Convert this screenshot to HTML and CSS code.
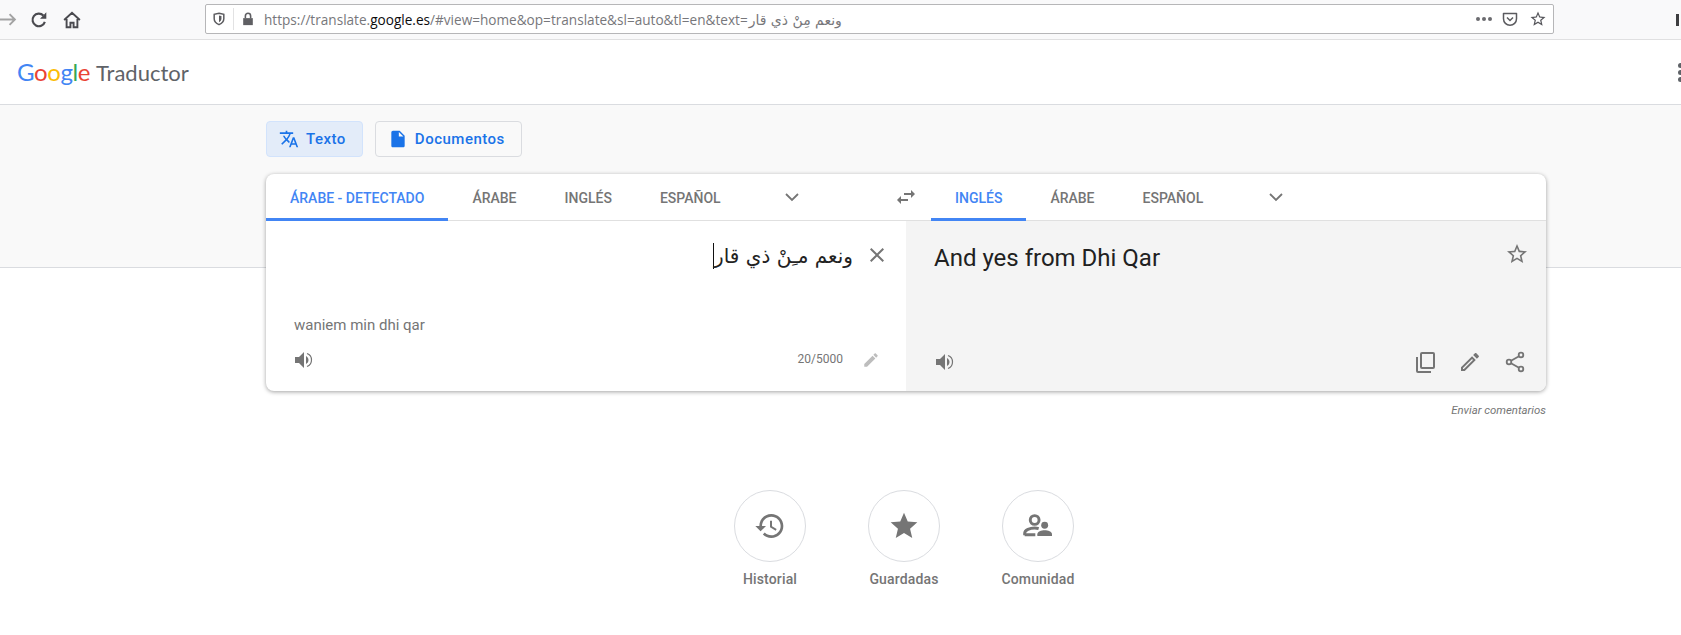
FILE: index.html
```html
<!DOCTYPE html>
<html lang="es">
<head>
  <meta charset="utf-8">
  <title>Google Traductor</title>
  <link rel="stylesheet" href="styles.css">
</head>
<body>

<div class="toolbar">
  <svg class="tb-back" viewBox="0 0 16 16"><path d="M-3 8h17M9 3l5 5-5 5" fill="none" stroke="#a3a3a3" stroke-width="1.8"/></svg>
  <svg class="tb-reload" viewBox="0 0 16 16"><path d="M13.2 9.6A5.6 5.6 0 1 1 11.9 4" fill="none" stroke="#4a4a4f" stroke-width="1.9"/><path d="M14.5 1.2v5.6H8.9z" fill="#4a4a4f"/></svg>
  <svg class="tb-home" viewBox="0 0 16 16"><path d="M1 8l7-6.5L15 8M3.2 7v7.5h3.4v-4h2.8v4h3.4V7" fill="none" stroke="#4a4a4f" stroke-width="1.7"/></svg>
  <div class="urlbar">
    <svg class="ub-shield" viewBox="0 0 16 16"><path d="M8 1.5l5.5 1.2v5c0 3-2.3 5.4-5.5 6.8-3.2-1.4-5.5-3.8-5.5-6.8v-5z" fill="none" stroke="#5b5b5f" stroke-width="1.7"/><path d="M8 4l2.8.7v3c0 1.700-1.200 3-2.800 3.900z" fill="#5b5b5f"/></svg>
    <span class="ub-sep"></span>
    <svg class="ub-lock" viewBox="0 0 16 16"><path d="M2.500 7h11v8h-11z" fill="#5f5f63"/><path d="M5 7V4.500a3 3 0 0 1 6 0V7" fill="none" stroke="#5f5f63" stroke-width="1.800"/></svg>
    <div class="ub-url">https://translate.<b>google.es</b>/#view=home&amp;op=translate&amp;sl=auto&amp;tl=en&amp;text=<bdi lang="ar">ونعم مِنْ ذي قار</bdi></div>
    <span class="ub-dots"><i></i><i></i><i></i></span>
    <svg class="ub-pocket" viewBox="0 0 16 16"><path d="M1.500 2.500h13v5.300a6.500 6.500 0 0 1-13 0z" fill="none" stroke="#5b5b5f" stroke-width="1.500" stroke-linejoin="round"/><path d="M5 6.500l3 3 3-3" fill="none" stroke="#5b5b5f" stroke-width="1.500"/></svg>
    <svg class="ub-star" viewBox="0 0 24 24"><path fill="#55555a" d="M22 9.240l-7.190-.62L12 2 9.190 8.630 2 9.240l5.460 4.730L5.820 21 12 17.270 18.180 21l-1.630-7.030L22 9.240zM12 15.400l-3.760 2.270 1-4.280-3.320-2.880 4.380-.38L12 6.100l1.710 4.040 4.380.38-3.320 2.880 1 4.280L12 15.400z"/></svg>
  </div>
  <span class="tb-edge"></span>
</div>

<header class="appbar">
  <div class="logo">
    <span class="logo-google"><i class="c-blue">G</i><i class="c-red">o</i><i class="c-yellow">o</i><i class="c-blue">g</i><i class="c-green">l</i><i class="c-red">e</i></span>
    <span class="logo-name">Traductor</span>
  </div>
  <span class="appbar-dots"><i></i><i></i><i></i></span>
</header>

<main class="main">
  <div class="modes">
    <button class="mode mode-on">
      <svg viewBox="0 0 24 24"><path d="M12.870 15.070l-2.540-2.510.03-.03c1.740-1.940 2.980-4.170 3.710-6.530H17V4h-7V2H8v2H1v1.990h11.170C11.500 7.920 10.440 9.750 9 11.350 8.070 10.320 7.300 9.190 6.690 8h-2c.73 1.630 1.730 3.170 2.980 4.560l-5.090 5.020L4 19l5-5 3.110 3.110.76-2.040zM18.500 10h-2L12 22h2l1.120-3h4.750L21 22h2l-4.500-12zm-2.620 7l1.620-4.330L19.120 17h-3.240z"/></svg>
      Texto
    </button>
    <button class="mode">
      <svg viewBox="0 0 24 24"><path d="M14 2H6c-1.100 0-2 .9-2 2v16c0 1.100.9 2 2 2h12c1.100 0 2-.9 2-2V8l-6-6zm-1 7V3.500L18.500 9H13z"/></svg>
      Documentos
    </button>
  </div>

  <section class="card">
    <div class="tabbar">
      <div class="tabs tabs-src">
        <span class="tab tab-on">ÁRABE - DETECTADO</span>
        <span class="tab">ÁRABE</span>
        <span class="tab">INGLÉS</span>
        <span class="tab">ESPAÑOL</span>
        <svg class="chev" viewBox="0 0 24 24"><path d="M6 9l6 6 6-6" fill="none" stroke="#757575" stroke-width="1.800"/></svg>
      </div>
      <svg class="swap" viewBox="0 0 24 24"><path d="M6.990 11L3 15l3.990 4v-3H14v-2H6.990v-3zM21 9l-3.990-4v3H10v2h7.010v3L21 9z"/></svg>
      <div class="tabs tabs-dst">
        <span class="tab tab-on">INGLÉS</span>
        <span class="tab">ÁRABE</span>
        <span class="tab">ESPAÑOL</span>
        <svg class="chev" viewBox="0 0 24 24"><path d="M6 9l6 6 6-6" fill="none" stroke="#757575" stroke-width="1.800"/></svg>
      </div>
    </div>

    <div class="panes">
      <div class="pane pane-src">
        <div class="src-row">
          <div class="src-text"><span class="caret"></span><bdi lang="ar">ونعم مـِنْ ذي قار</bdi></div>
          <svg class="ico ico-close" viewBox="0 0 24 24"><path d="M19 6.410L17.590 5 12 10.590 6.410 5 5 6.410 10.590 12 5 17.590 6.410 19 12 13.410 17.590 19 19 17.590 13.410 12z"/></svg>
        </div>
        <div class="translit">waniem min dhi qar</div>
        <div class="pane-foot">
          <svg class="ico" viewBox="0 0 24 24"><path d="M3 9v6h4l5 5V4L7 9H3zm13.500 3c0-1.770-1.020-3.290-2.500-4.030v8.050c1.480-.73 2.500-2.250 2.500-4.020z"/><path d="M15 5.500c3 1 4.500 3.500 4.500 6.500s-1.500 5.500-4.500 6.500" fill="none" stroke="#757575" stroke-width="1.200"/></svg>
          <span class="count">20/5000</span>
          <svg class="ico ico-faint" viewBox="0 0 24 24"><path d="M3 17.250V21h3.750L17.810 9.940l-3.750-3.750L3 17.250zM20.710 7.040c.39-.39.39-1.020 0-1.410l-2.340-2.340c-.39-.39-1.020-.39-1.410 0l-1.830 1.830 3.750 3.750 1.830-1.830z"/></svg>
        </div>
      </div>

      <div class="pane pane-dst">
        <div class="dst-row">
          <div class="dst-text">And yes from Dhi Qar</div>
          <svg class="ico" viewBox="0 0 24 24"><path d="M22 9.240l-7.190-.62L12 2 9.190 8.630 2 9.240l5.460 4.730L5.820 21 12 17.270 18.180 21l-1.630-7.030L22 9.240zM12 15.400l-3.760 2.270 1-4.280-3.320-2.880 4.380-.38L12 6.100l1.710 4.040 4.380.38-3.320 2.880 1 4.280L12 15.400z"/></svg>
        </div>
        <div class="pane-foot dst-foot">
          <svg class="ico" viewBox="0 0 24 24"><path d="M3 9v6h4l5 5V4L7 9H3zm13.500 3c0-1.770-1.020-3.290-2.500-4.030v8.050c1.480-.73 2.500-2.250 2.500-4.020z"/><path d="M15 5.500c3 1 4.500 3.500 4.500 6.500s-1.500 5.500-4.500 6.500" fill="none" stroke="#757575" stroke-width="1.200"/></svg>
          <span class="dst-actions">
            <svg class="ico" viewBox="0 0 24 24"><rect x="8" y="3" width="13" height="15" rx="1" fill="none" stroke="#757575" stroke-width="2"/><path d="M4 7v14a1 1 0 0 0 1 1h13" fill="none" stroke="#757575" stroke-width="2"/></svg>
            <svg class="ico" viewBox="0 0 24 24"><path d="M14.060 9.020l.92.92L5.920 19H5v-.92l9.060-9.060M17.660 3c-.25 0-.51.100-.7.290l-1.830 1.830 3.750 3.750 1.830-1.830c.39-.39.39-1.020 0-1.410l-2.340-2.340c-.2-.2-.45-.29-.71-.29zm-3.600 3.190L3 17.250V21h3.750L17.810 9.940l-3.750-3.750z"/></svg>
            <svg class="ico" viewBox="0 0 24 24"><g fill="none" stroke="#757575" stroke-width="1.800"><circle cx="18" cy="5" r="2.300"/><circle cx="6" cy="12" r="2.300"/><circle cx="18" cy="19" r="2.300"/><path d="M8 10.800l8-4.600M8 13.200l8 4.600"/></g></svg>
          </span>
        </div>
      </div>
    </div>
  </section>

  <div class="feedback">Enviar comentarios</div>

  <div class="shortcuts">
    <div class="shortcut">
      <span class="round"><svg viewBox="0 0 24 24"><path d="M13 3c-4.970 0-9 4.030-9 9H1l3.890 3.890.07.14L9 12H6c0-3.870 3.130-7 7-7s7 3.130 7 7-3.130 7-7 7c-1.930 0-3.680-.79-4.940-2.060l-1.420 1.420C8.270 19.990 10.510 21 13 21c4.970 0 9-4.030 9-9s-4.030-9-9-9zm-1 5v5l4.280 2.540.72-1.210-3.500-2.080V8H12z"/></svg></span>
      <span class="shortcut-name">Historial</span>
    </div>
    <div class="shortcut">
      <span class="round"><svg viewBox="0 0 24 24"><path d="M12 17.270L18.180 21l-1.640-7.030L22 9.240l-7.190-.61L12 2 9.190 8.630 2 9.240l5.460 4.730L5.820 21z"/></svg></span>
      <span class="shortcut-name">Guardadas</span>
    </div>
    <div class="shortcut">
      <span class="round"><svg viewBox="0 0 24 24"><circle cx="9.500" cy="7.500" r="3.300" fill="none" stroke="#757575" stroke-width="2.200"/><path d="M2 19v-1.500c0-2.600 4-4 7.500-4 1 0 2 .1 3 .4M2 18.500h8" fill="none" stroke="#757575" stroke-width="2.200"/><circle cx="17" cy="11.500" r="2.600"/><path d="M11.500 19.500v-1.300c0-2 3-3 5.500-3s5.500 1 5.500 3v1.300z"/></svg></span>
      <span class="shortcut-name">Comunidad</span>
    </div>
  </div>
</main>

</body>
</html>
```

FILE: styles.css
```css
html, body {
  height: 100%;
  margin: 0;
}
body {
  background: #fff;
  font-family: Roboto, "Liberation Sans", sans-serif;
  color: #757575;
  overflow: hidden;
}

/* browser chrome */
.toolbar {
  display: flex;
  align-items: center;
  height: 39px;
  background: #f9f9fa;
  border-bottom: 1px solid #e0e0e1;
}
.toolbar svg {
  flex: none;
}
.tb-back {
  width: 17px;
  height: 17px;
}
.tb-reload {
  width: 18px;
  height: 18px;
  margin-left: 13px;
}
.tb-home {
  width: 18px;
  height: 18px;
  margin-left: 15px;
}
.urlbar {
  display: flex;
  align-items: center;
  width: 1349px;
  height: 30px;
  margin-left: 124px;
  margin-top: -1px;
  box-sizing: border-box;
  background: #fff;
  border: 1px solid #b6b6b8;
  border-radius: 2px;
  font-family: "Open Sans", sans-serif;
  font-size: 13.6px;
  color: #77777b;
}
.ub-shield {
  width: 14px;
  height: 14px;
  margin-left: 6px;
}
.ub-sep {
  width: 1px;
  height: 22px;
  margin-left: 7px;
  background: #e2e2e3;
}
.ub-lock {
  width: 14px;
  height: 14px;
  margin-left: 7px;
}
.ub-url {
  flex: 1;
  margin-left: 9px;
  white-space: nowrap;
}
.ub-url b {
  font-weight: 400;
  color: #0c0c0d;
}
.ub-url bdi {
  font-family: "DejaVu Sans", sans-serif;
  font-size: 14px;
  margin-left: 1px;
}
.ub-dots {
  display: flex;
  gap: 2px;
  margin-right: 10px;
}
.ub-dots i {
  width: 4px;
  height: 4px;
  border-radius: 50%;
  background: #6b6b6f;
}
.ub-pocket {
  width: 16px;
  height: 16px;
  margin-right: 11px;
}
.ub-star {
  width: 18px;
  height: 18px;
  margin-right: 6px;
}
.tb-edge {
  width: 3px;
  height: 12px;
  margin-left: 122px;
  background: #3d3d40;
}

/* app header */
.appbar {
  display: flex;
  align-items: center;
  justify-content: space-between;
  height: 64px;
  background: #fff;
  border-bottom: 1px solid #dadce0;
}
.logo {
  display: flex;
  align-items: baseline;
  gap: 6px;
  margin-left: 17px;
  margin-top: -2px;
}
.logo-google {
  font-family: Lato, sans-serif;
  font-size: 24px;
  letter-spacing: -.4px;
}
.logo-google i {
  font-style: normal;
}
.c-blue { color: #4285f4; }
.c-red { color: #ea4335; }
.c-yellow { color: #fbbc05; }
.c-green { color: #34a853; }
.logo-name {
  font-family: Lato, sans-serif;
  font-size: 22px;
  color: #5f6368;
}
.appbar-dots {
  display: flex;
  flex-direction: column;
  gap: 2px;
  margin-right: -2px;
}
.appbar-dots i {
  width: 5px;
  height: 5px;
  border-radius: 50%;
  background: #5f6368;
}

/* main area: the grey band stops behind the card */
.main {
  height: 530px;
  padding: 16px 135px 0 266px;
  box-sizing: border-box;
  background: linear-gradient(#f9f9f9 162px, #dadce0 162px, #dadce0 163px, #fff 163px);
}
.modes {
  display: flex;
  gap: 12px;
}
.mode {
  display: flex;
  align-items: center;
  gap: 7px;
  height: 36px;
  padding: 0 16px 0 12px;
  background: #fff0;
  border: 1px solid #dadce0;
  border-radius: 4px;
  font-family: Roboto, sans-serif;
  font-size: 15px;
  font-weight: 500;
  letter-spacing: .5px;
  color: #1a73e8;
}
.mode svg {
  width: 20px;
  height: 20px;
  fill: #1a73e8;
}
.mode-on {
  background: #e3ecf9;
  border-color: #d2e3fc;
}

.card {
  margin-top: 17px;
  height: 217px;
  display: flex;
  flex-direction: column;
  background: #fff;
  border-radius: 8px;
  overflow: hidden;
  box-shadow: 0 1px 4px rgba(0, 0, 0, .37);
}
.tabbar {
  display: flex;
  align-items: stretch;
  height: 47px;
  flex: none;
  box-sizing: border-box;
  border-bottom: 1px solid #e0e0e0;
}
.tabs {
  display: flex;
  align-items: stretch;
}
.tabs-src {
  width: 621px;
}
.tabs-dst {
  margin-left: 13px;
}
.tab {
  display: flex;
  align-items: center;
  padding: 3px 24px 0;
  font-size: 14px;
  font-weight: 500;
  color: #757575;
  margin-bottom: -1px;
  border-bottom: 3px solid transparent;
}
.tab-on {
  color: #4285f4;
  border-bottom-color: #4285f4;
}
.chev {
  width: 24px;
  height: 24px;
  align-self: center;
  margin-left: 35px;
}
.tabs-dst .chev {
  margin-left: 37px;
}
.swap {
  width: 24px;
  height: 24px;
  align-self: center;
  fill: #757575;
  flex: none;
  margin-left: 7px;
}
.panes {
  flex: 1;
  display: flex;
}
.pane {
  display: flex;
  flex-direction: column;
  box-sizing: border-box;
}
.pane-src {
  width: 640px;
}
.pane-dst {
  flex: 1;
  background: #f4f4f4;
}
.ico {
  width: 24px;
  height: 24px;
  flex: none;
  fill: #757575;
}
.ico-close {
  margin-top: 1px;
}
.ico-faint {
  width: 18px;
  height: 18px;
  fill: #bdbdbd;
}
.src-row {
  display: flex;
  gap: 12px;
  padding: 21px 17px 0 0;
}
.src-text {
  flex: 1;
  display: flex;
  justify-content: flex-end;
  align-items: center;
  height: 28px;
  font-family: "DejaVu Sans", sans-serif;
  font-size: 20px;
  color: #222;
}
.caret {
  width: 1px;
  height: 26px;
  background: #111;
}
.translit {
  margin-top: auto;
  padding-left: 28px;
  font-size: 15px;
  line-height: 20px;
}
.pane-foot {
  display: flex;
  align-items: center;
  height: 44px;
  margin-top: 3px;
  padding: 0 26px 9px 26px;
}
.count {
  margin-left: auto;
  margin-right: 19px;
  margin-bottom: 3px;
  font-size: 12px;
}
.dst-row {
  display: flex;
  justify-content: space-between;
  padding: 21px 17px 0 28px;
}
.dst-text {
  font-size: 24px;
  line-height: 32px;
  color: #212121;
}
.dst-foot {
  margin-top: auto;
  padding: 0 19px 7px 27px;
  justify-content: space-between;
}
.dst-actions {
  display: flex;
  gap: 21px;
}

.feedback {
  margin-top: 12px;
  text-align: right;
  font-size: 11.400px;
  line-height: 14px;
  font-style: italic;
  color: #757575;
}

.shortcuts {
  display: flex;
  justify-content: center;
  margin-top: 73px;
  padding-right: 4px;
}
.shortcut {
  width: 134px;
  display: flex;
  flex-direction: column;
  align-items: center;
  gap: 7px;
}
.round {
  width: 72px;
  height: 72px;
  display: flex;
  align-items: center;
  justify-content: center;
  box-sizing: border-box;
  border: 1px solid #dadce0;
  border-radius: 50%;
}
.round svg {
  width: 32px;
  height: 32px;
  fill: #757575;
}
.shortcut-name {
  font-size: 14px;
  font-weight: 500;
  letter-spacing: .15px;
  line-height: 20px;
}
```
